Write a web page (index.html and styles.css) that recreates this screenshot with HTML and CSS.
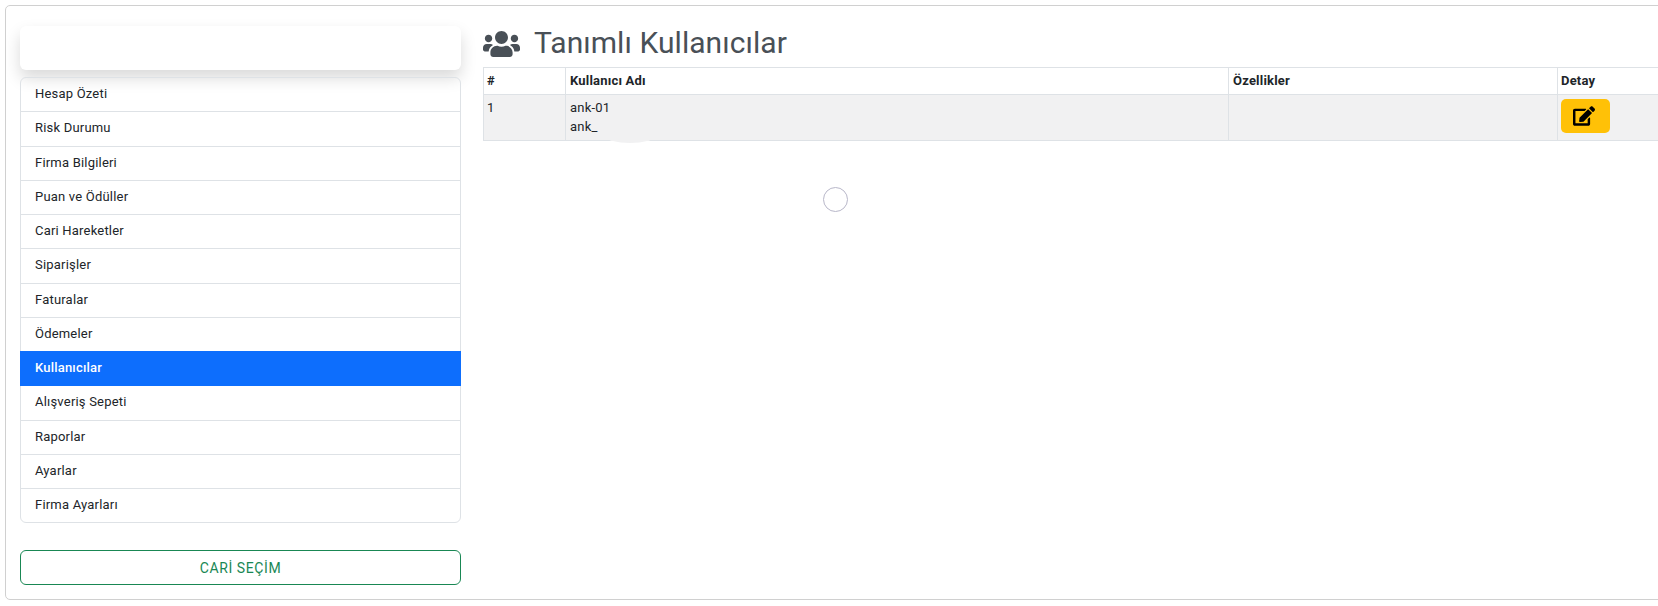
FILE: index.html
```html
<!DOCTYPE html>
<html lang="tr">
<head>
    <meta charset="UTF-8">
    <meta name="viewport" content="width=device-width, initial-scale=1.0">
    <title>Tanımlı Kullanıcılar</title>
    <link rel="stylesheet" href="styles.css">
</head>
<body>
    <div class="panel">
        <aside class="sidebar">
            <div class="logo-box"></div>
            <ul class="menu">
                <li class="menu-item">Hesap Özeti</li>
                <li class="menu-item">Risk Durumu</li>
                <li class="menu-item">Firma Bilgileri</li>
                <li class="menu-item">Puan ve Ödüller</li>
                <li class="menu-item">Cari Hareketler</li>
                <li class="menu-item">Siparişler</li>
                <li class="menu-item">Faturalar</li>
                <li class="menu-item">Ödemeler</li>
                <li class="menu-item active">Kullanıcılar</li>
                <li class="menu-item">Alışveriş Sepeti</li>
                <li class="menu-item">Raporlar</li>
                <li class="menu-item">Ayarlar</li>
                <li class="menu-item">Firma Ayarları</li>
            </ul>
            <button class="select-btn">CARİ SEÇİM</button>
        </aside>

        <main class="content">
            <h1 class="page-title">
                <svg class="title-icon" viewBox="0 0 640 512" aria-hidden="true">
                    <path d="M96 224c35.300 0 64-28.700 64-64s-28.700-64-64-64-64 28.700-64 64 28.700 64 64 64zm448 0c35.300 0 64-28.700 64-64s-28.700-64-64-64-64 28.700-64 64 28.700 64 64 64zm32 32h-64c-17.600 0-33.500 7.100-45.100 18.600 40.300 22.100 68.900 62 75.100 109.400h66c17.700 0 32-14.300 32-32v-32c0-35.300-28.700-64-64-64zm-256 0c61.900 0 112-50.100 112-112S381.900 32 320 32 208 82.100 208 144s50.100 112 112 112zm76.800 32h-8.300c-20.800 10-43.900 16-68.500 16s-47.600-6-68.500-16h-8.300C179.600 288 128 339.600 128 403.200V432c0 26.500 21.500 48 48 48h288c26.500 0 48-21.500 48-48v-28.800c0-63.600-51.600-115.200-115.200-115.200zm-223.700-13.400C161.500 263.100 145.600 256 128 256H64c-35.300 0-64 28.700-64 64v32c0 17.700 14.300 32 32 32h65.900c6.300-47.400 34.900-87.300 75.200-109.400z"/>
                </svg>
                <span>Tanımlı Kullanıcılar</span>
            </h1>
            <table class="users-table">
                <thead>
                    <tr>
                        <th class="col-no">#</th>
                        <th class="col-name">Kullanıcı Adı</th>
                        <th class="col-props">Özellikler</th>
                        <th class="col-detail">Detay</th>
                    </tr>
                </thead>
                <tbody>
                    <tr>
                        <td class="cell-no">1</td>
                        <td>ank-01<br>ank_</td>
                        <td></td>
                        <td class="cell-detail">
                            <button class="edit-btn" aria-label="Düzenle">
                                <svg class="edit-icon" viewBox="0 0 576 512" aria-hidden="true">
                                    <path d="M402.600 83.200l90.200 90.200c3.800 3.800 3.800 10 0 13.800L274.400 405.600l-92.800 10.300c-12.400 1.400-22.900-9.100-21.500-21.500l10.300-92.800L388.800 83.200c3.800-3.800 10-3.800 13.800 0zm162-22.900l-48.800-48.800c-15.200-15.200-39.900-15.200-55.200 0l-35.400 35.400c-3.800 3.800-3.800 10 0 13.800l90.200 90.200c3.800 3.800 10 3.800 13.800 0l35.400-35.400c15.200-15.300 15.200-40 0-55.200zM384 346.200V448H64V128h229.800c3.200 0 6.200-1.300 8.500-3.500l40-40c7.600-7.600 2.200-20.500-8.500-20.500H48C21.500 64 0 85.500 0 112v352c0 26.500 21.500 48 48 48h352c26.500 0 48-21.500 48-48V306.200c0-10.700-12.900-16-20.500-8.500l-40 40c-2.200 2.300-3.500 5.300-3.500 8.500z"/>
                                </svg>
                            </button>
                        </td>
                    </tr>
                </tbody>
            </table>
        </main>
    </div>
    <!-- smear over the table border under the user name, and the page spinner -->
    <div class="smear"></div>
    <div class="spinner"></div>
</body>
</html>
```

FILE: styles.css
```css
html, body {
    height: 100%;
}

body {
    margin: 0;
    overflow: hidden;
    background-color: #fff;
    font-family: Roboto, "Liberation Sans", Arial, sans-serif;
    font-size: 13px;
    line-height: 1.5;
    letter-spacing: 0.2px;
    color: #212529;
}

.panel {
    display: flex;
    gap: 22px;
    width: 1800px;
    height: 595px;
    margin: 5px 0 0 5px;
    padding: 20px 14px 13px 14px;
    box-sizing: border-box;
    border: 1px solid #d0d0d0;
    border-radius: 5px;
}

.sidebar {
    flex: 0 0 441px;
    display: flex;
    flex-direction: column;
}

.logo-box {
    height: 44px;
    border-radius: 6px;
    background-color: #fff;
    box-shadow: 0 8px 16px rgba(0,0,0,0.15);
}

.menu {
    list-style: none;
    margin: 7px 0 0 0;
    padding: 0;
    border: 1px solid #dee2e6;
    border-radius: 6px;
}

.menu-item {
    padding: 6px 14px 8px;
    height: 19.25px;
    border-top: 1px solid #dee2e6;
}

.menu-item:first-child {
    border-top: 0;
}

.menu-item.active {
    position: relative;
    margin: 0 -1px -1px;
    padding: 6px 15px 9px;
    background-color: #0d6efd;
    border-top-color: #0d6efd;
    color: #fff;
    font-weight: 500;
}

.select-btn {
    margin-top: 27px;
    height: 35px;
    border: 1px solid #198754;
    border-radius: 6px;
    background-color: #fff;
    color: #198754;
    font-family: inherit;
    font-size: 14px;
    letter-spacing: 0.6px;
}

.content {
    flex: 1;
}

.page-title {
    display: flex;
    align-items: center;
    gap: 14px;
    height: 41px;
    box-sizing: border-box;
    margin: 0;
    padding-bottom: 8px;
    font-size: 30px;
    font-weight: 400;
    letter-spacing: 0.05px;
    line-height: 30px;
    color: #495057;
}

.title-icon {
    width: 37px;
    height: 30px;
    margin-top: 3px;
    fill: #495057;
}

.users-table {
    width: 1230px;
    table-layout: fixed;
    border-collapse: collapse;
}

.users-table th,
.users-table td {
    padding: 3px 3px 3px 4px;
    border: 1px solid #dee2e6;
    text-align: left;
    vertical-align: top;
}

.users-table th {
    font-weight: 700;
}

.users-table tbody tr {
    background-color: #f1f1f2;
}

.col-no { width: 75px; }
.col-name { width: 655px; }
.col-props { width: 321px; }

.users-table .col-no,
.users-table .cell-no {
    padding-left: 3px;
}

.users-table .col-detail,
.users-table .cell-detail {
    padding-left: 3px;
}

.edit-btn {
    display: block;
    width: 49px;
    height: 34px;
    margin-top: 1px;
    border: 0;
    border-radius: 5px;
    background-color: #ffc107;
    padding: 0;
}

.edit-icon {
    display: block;
    width: 22px;
    height: 20px;
    margin-left: 12px;
}

.smear {
    position: absolute;
    left: 606px;
    top: 130px;
    width: 48px;
    height: 13px;
    border-radius: 50%;
    background-color: #f1f1f2;
}

.spinner {
    position: absolute;
    left: 823px;
    top: 187px;
    width: 25px;
    height: 25px;
    box-sizing: border-box;
    border: 1.5px solid #b8b7c9;
    border-radius: 50%;
}
```
